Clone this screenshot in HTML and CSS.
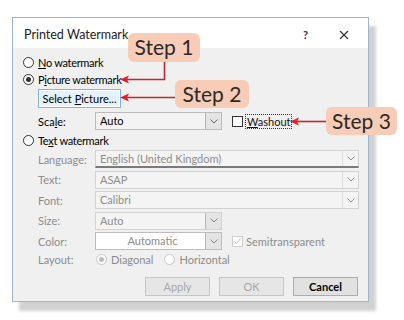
FILE: index.html
```html
<!DOCTYPE html>
<html lang="en">
<head>
  <meta charset="UTF-8" />
  <title>Printed Watermark</title>
  <link rel="stylesheet" href="styles.css">
</head>
<body>

<div class="stage">
  <div class="dialog">
    <div class="titlebar">
      <span class="title">Printed Watermark</span>
      <span class="help">?</span>
      <svg class="close" width="10" height="10" viewBox="0 0 10 10">
        <path d="M1 1 L9 9 M9 1 L1 9" stroke="#333" stroke-width="1.2" fill="none"/>
      </svg>
    </div>

    <div class="panel">
      <div class="radio-row r-first"><span class="radio"></span><span><u>N</u>o watermark</span></div>
      <div class="radio-row r-second"><span class="radio checked"></span><span>P<u>i</u>cture watermark</span></div>

      <div class="indent btn-row">
        <button class="btn default">Select <u>P</u>icture...</button>
      </div>

      <div class="indent field-row scale-row">
        <span class="label">Sca<u>l</u>e:</span>
        <div class="combo short enabled"><span class="val">Auto</span><span class="caret"><svg width="8" height="5" viewBox="0 0 8 5"><path d="M0.5 0.5 L4 4 L7.5 0.5" stroke="#666" fill="none"/></svg></span></div>
        <span class="checkbox"></span>
        <span class="focus"><u>W</u>ashout</span>
      </div>

      <div class="radio-row r-text"><span class="radio"></span><span>Te<u>x</u>t watermark</span></div>

      <div class="indent field-row dim">
        <span class="label">Language:</span>
        <div class="combo long lang"><span class="val">English (United Kingdom)</span><span class="caret"><svg width="8" height="5" viewBox="0 0 8 5"><path d="M0.5 0.5 L4 4 L7.5 0.5" stroke="#999" fill="none"/></svg></span></div>
      </div>
      <div class="indent field-row dim">
        <span class="label">Text:</span>
        <div class="combo long"><span class="val">ASAP</span><span class="caret"><svg width="8" height="5" viewBox="0 0 8 5"><path d="M0.5 0.5 L4 4 L7.5 0.5" stroke="#999" fill="none"/></svg></span></div>
      </div>
      <div class="indent field-row dim">
        <span class="label">Font:</span>
        <div class="combo long"><span class="val">Calibri</span><span class="caret"><svg width="8" height="5" viewBox="0 0 8 5"><path d="M0.5 0.5 L4 4 L7.5 0.5" stroke="#999" fill="none"/></svg></span></div>
      </div>
      <div class="indent field-row dim">
        <span class="label">Size:</span>
        <div class="combo short boxed"><span class="val">Auto</span><span class="caret"><svg width="8" height="5" viewBox="0 0 8 5"><path d="M0.5 0.5 L4 4 L7.5 0.5" stroke="#888" fill="none"/></svg></span></div>
      </div>
      <div class="indent field-row dim">
        <span class="label">Color:</span>
        <div class="combo short boxed white"><span class="val center">Automatic</span><span class="caret"><svg width="8" height="5" viewBox="0 0 8 5"><path d="M0.5 0.5 L4 4 L7.5 0.5" stroke="#888" fill="none"/></svg></span></div>
        <span class="checkbox disabled"><svg width="9" height="9" viewBox="0 0 9 9"><path d="M1.5 4.5 L3.5 6.5 L7.5 1.5" stroke="#c4c4c4" fill="none"/></svg></span>
        <span class="semi">Semitransparent</span>
      </div>
      <div class="indent field-row dim layout-row">
        <span class="label">Layout:</span>
        <span class="radio disabled checked"></span><span class="opt">Diagonal</span>
        <span class="radio disabled"></span><span class="opt">Horizontal</span>
      </div>

      <div class="actions">
        <button class="btn disabled">Apply</button>
        <button class="btn disabled">OK</button>
        <button class="btn cancel">Cancel</button>
      </div>
    </div>
  </div>

  <div class="callout step1">Step 1</div>
  <div class="callout step2">Step 2</div>
  <div class="callout step3">Step 3</div>

  <svg class="arrows" width="404" height="320" viewBox="0 0 404 320">
    <path d="M164.5 62 V79.5 H127" stroke="#c0272f" stroke-width="1.6" fill="none"/>
    <path d="M120 79.5 L129 75.5 L127 79.5 L129 83.5 Z" fill="#e0202a"/>
    <path d="M175 97.5 H127" stroke="#c0272f" stroke-width="1.6" fill="none"/>
    <path d="M120 97.5 L129 93.5 L127 97.5 L129 101.5 Z" fill="#e0202a"/>
    <path d="M326 121.5 H297" stroke="#c0272f" stroke-width="1.6" fill="none"/>
    <path d="M290 121.5 L299 117.5 L297 121.5 L299 125.5 Z" fill="#e0202a"/>
  </svg>
</div>

</body>
</html>
```

FILE: styles.css
```css
* {
  box-sizing: border-box;
}

body {
  margin: 0;
  padding: 0;
  background: #fff;
  font-family: Lato, 'Open Sans', sans-serif;
  font-size: 11px;
  color: #111;
}

u {
  text-decoration: underline;
  text-underline-offset: 1px;
}

.stage {
  position: relative;
  width: 404px;
  height: 320px;
  overflow: hidden;
  padding: 17px 0 0 12px;
}

.dialog {
  width: 357px;
  height: 285px;
  border: 1px solid #9db4cf;
  background: #f0f0f0;
  box-shadow: 7px 9px 3px rgba(0, 0, 0, 0.18);
}

.titlebar {
  height: 30px;
  background: #fff;
  display: flex;
  align-items: center;
  padding: 3px 0 0 11px;
}

.title {
  flex: 1;
  font-size: 12.5px;
  color: #222;
}

.help {
  font-size: 11px;
  font-weight: bold;
  color: #333;
  margin-right: 31px;
}

.close {
  margin-right: 19px;
}

.panel {
  padding: 5px 0 0 10px;
}

.radio-row {
  display: flex;
  align-items: center;
  gap: 4px;
  height: 17px;
  color: #000;
  letter-spacing: -0.3px;
}

.r-first { height: 18px; }

.radio {
  width: 11px;
  height: 11px;
  border-radius: 50%;
  border: 1px solid #333;
  background: #fff;
  position: relative;
  flex: none;
}

.radio.checked::after {
  content: "";
  position: absolute;
  left: 2px;
  top: 2px;
  width: 5px;
  height: 5px;
  border-radius: 50%;
  background: #333;
}

.radio.disabled {
  border-color: #c8c8c8;
}

.radio.disabled.checked::after {
  background: #bdbdbd;
}

.indent {
  padding-left: 15px;
}

.btn-row {
  margin-top: 1px;
  height: 19px;
}

.btn {
  font: inherit;
  height: 19px;
  width: 65px;
  padding: 0;
  border: 1px solid #adadad;
  background: #e1e1e1;
  color: #000;
}

.btn.default {
  width: 83px;
  border-color: #7fb2e5;
  background: #e5f1fb;
  box-shadow: inset 0 0 0 1px #fff;
}

.btn.disabled {
  color: #a6a6a6;
  border-color: #c6c6c6;
  background: #e6e6e6;
}

.btn.cancel {
  font-weight: bold;
}

.field-row {
  display: flex;
  align-items: center;
  height: 18px;
  margin-top: 2.5px;
}

.scale-row {
  margin-top: 4px;
}

.r-text {
  margin-top: 1px;
  height: 18px;
}

.r-text + .field-row {
  margin-top: 1px;
}

.label {
  width: 57px;
  flex: none;
  color: #000;
}

.dim .label,
.dim .opt,
.dim .semi {
  color: #8c8c8c;
}

.combo {
  height: 18px;
  display: flex;
  border: 1px solid #d2d2d2;
  background: #f4f4f4;
  color: #8c8c8c;
}

.combo.enabled {
  border-color: #bcbcbc;
  background: #f3f3f3;
  color: #000;
}

.combo.short { width: 127px; }
.combo.long { width: 264px; }

.combo.lang {
  border-bottom: 2px solid #7a7a7a;
}

.combo.white {
  background: #fff;
  border-color: #bdbdbd;
}

.val {
  flex: 1;
  padding-left: 4px;
  line-height: 16px;
}

.val.center {
  text-align: center;
}

.caret {
  width: 16px;
  display: flex;
  align-items: center;
  justify-content: center;
  border-left: 1px solid #dcdcdc;
}

.combo.enabled .caret,
.combo.boxed .caret {
  background: #e4e4e4;
  border-left-color: #b6b6b6;
}

.checkbox {
  width: 11px;
  height: 11px;
  border: 1px solid #333;
  background: #fff;
  margin-left: 10px;
  flex: none;
  display: flex;
  align-items: center;
  justify-content: center;
}

.checkbox.disabled {
  border-color: #cfcfcf;
}

.focus {
  margin-left: 2px;
  padding: 0 1px;
  border: 1px dotted #333;
  line-height: 13px;
}

.semi {
  margin-left: 3px;
}

.layout-row {
  margin-top: 0;
}

.layout-row .radio {
  margin-left: 1px;
}

.layout-row .opt {
  margin-left: 4px;
  margin-right: 10px;
}

.actions {
  display: flex;
  justify-content: flex-end;
  gap: 9px;
  padding-right: 10px;
  margin-top: 9px;
}

.callout {
  position: absolute;
  height: 29px;
  border-radius: 6px;
  background: #f8ccb6;
  color: #2a2a2a;
  font-size: 21px;
  line-height: 28px;
  text-align: center;
}

.step1 { left: 128px; top: 33px; width: 72px; }
.step2 { left: 175px; top: 80px; width: 74px; height: 28px; }
.step3 { left: 326px; top: 107px; width: 71px; height: 28px; }

.arrows {
  position: absolute;
  left: 0;
  top: 0;
  pointer-events: none;
}
```
